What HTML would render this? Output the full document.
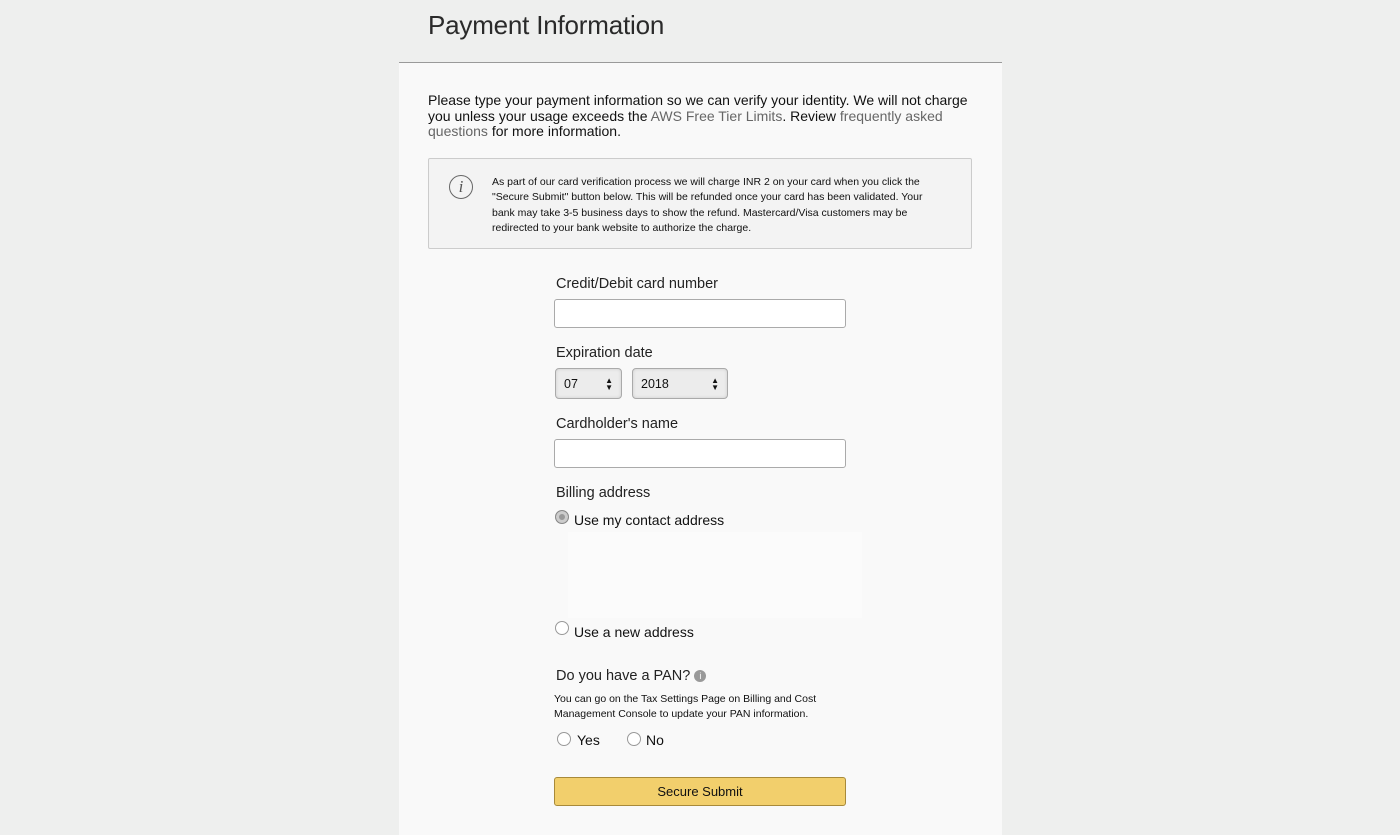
<!DOCTYPE html>
<html><head><meta charset="utf-8"><style>
*{margin:0;padding:0;box-sizing:border-box}
body{width:1400px;height:835px;background:#eeefee;font-family:"Liberation Sans",Arial,sans-serif;color:#111;position:relative;overflow:hidden}
.abs{position:absolute}
.panel{left:399px;top:62px;width:603px;height:773px;background:#f9f9f9;border-top:1px solid #9a9a9a}
h1{position:absolute;left:428px;top:10px;font-size:26px;font-weight:normal;color:#2a2a2a;letter-spacing:-0.2px}
.intro{left:428px;top:93px;width:540px;font-size:14px;line-height:15.5px;color:#111}
.intro span{color:#666}
.box{left:428px;top:158px;width:544px;height:91px;background:#f3f3f3;border:1px solid #ccc;border-radius:2px}
.box p{position:absolute;left:63px;top:16px;width:448px;font-size:10.5px;line-height:15.4px;color:#111}
.ic{position:absolute;left:20px;top:16px;width:24px;height:24px;border:1px solid #666;border-radius:50%;font-family:"Liberation Serif",serif;font-style:italic;font-size:17px;text-align:center;line-height:22px;color:#555}
.lbl{font-size:14.5px;color:#222}
.inp{width:292px;height:29px;background:#fff;border:1px solid #aaa;border-radius:3px}
.sel{height:31px;background:#ececec;border:1px solid #aaa;border-radius:4px;font-size:12.5px;padding:8px 0 0 8px;box-shadow:inset 0 0 3px #ccc}
.sel i{position:absolute;right:8px;top:8px;font-style:normal;font-size:8px;line-height:7px}
.radio{width:14px;height:14px;border:1px solid #999;border-radius:50%;background:#fff}
.txt{font-size:14px;color:#111}
.btn{left:554px;top:777px;width:292px;height:29px;background:#f2cf6c;border:1px solid #a88a3a;border-radius:3px;font-size:13px;text-align:center;line-height:27px;color:#111}
</style></head><body>
<h1>Payment Information</h1>
<div class="abs panel"></div>
<div class="abs intro">Please type your payment information so we can verify your identity. We will not charge you unless your usage exceeds the <span>AWS Free Tier Limits</span>. Review <span>frequently asked questions</span> for more information.</div>
<div class="abs box"><div class="ic">i</div><p>As part of our card verification process we will charge INR 2 on your card when you click the "Secure Submit" button below. This will be refunded once your card has been validated. Your bank may take 3-5 business days to show the refund. Mastercard/Visa customers may be redirected to your bank website to authorize the charge.</p></div>
<div class="abs lbl" style="left:556px;top:276px">Credit/Debit card number</div>
<div class="abs inp" style="left:554px;top:299px"></div>
<div class="abs lbl" style="left:556px;top:345px">Expiration date</div>
<div class="abs sel" style="left:555px;top:368px;width:67px">07<i>▲<br>▼</i></div>
<div class="abs sel" style="left:632px;top:368px;width:96px">2018<i>▲<br>▼</i></div>
<div class="abs lbl" style="left:556px;top:416px">Cardholder's name</div>
<div class="abs inp" style="left:554px;top:439px"></div>
<div class="abs lbl" style="left:556px;top:485px">Billing address</div>
<div class="abs radio" style="left:555px;top:510px;background:#999;border-color:#888;box-shadow:inset 0 0 0 3px #ccc"></div>
<div class="abs txt" style="left:574px;top:512px">Use my contact address</div>
<div class="abs" style="left:568px;top:532px;width:294px;height:86px;background:#fbfbfb"></div>
<div class="abs radio" style="left:555px;top:621px"></div>
<div class="abs txt" style="left:574px;top:624px">Use a new address</div>
<div class="abs lbl" style="left:556px;top:668px">Do you have a PAN? <span style="display:inline-block;width:12px;height:12px;border-radius:50%;background:#999;color:#fff;font-size:9px;text-align:center;line-height:12px;vertical-align:1px">i</span></div>
<div class="abs" style="left:554px;top:692px;font-size:10.5px;line-height:15px;color:#111">You can go on the Tax Settings Page on Billing and Cost<br>Management Console to update your PAN information.</div>
<div class="abs radio" style="left:557px;top:732px"></div>
<div class="abs txt" style="left:577px;top:732px">Yes</div>
<div class="abs radio" style="left:627px;top:732px"></div>
<div class="abs txt" style="left:646px;top:732px">No</div>
<div class="abs btn">Secure Submit</div>
</body></html>
